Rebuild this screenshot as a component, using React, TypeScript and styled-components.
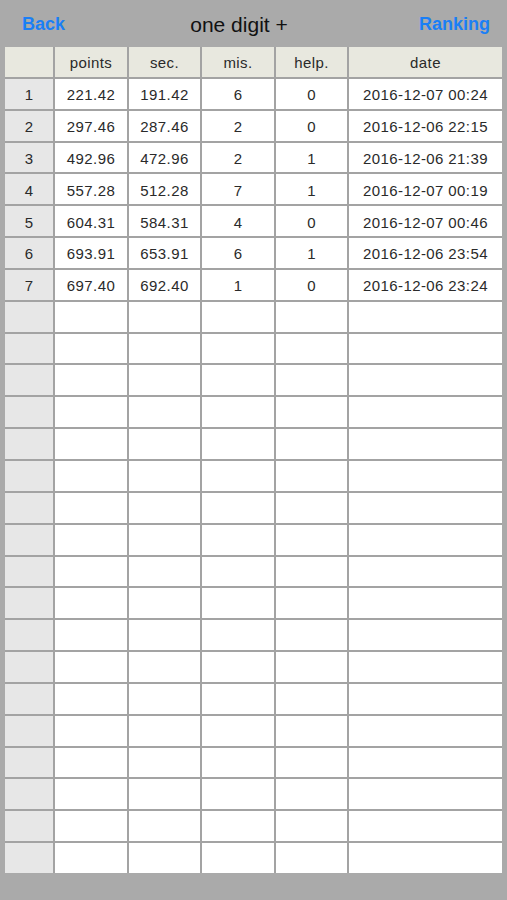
import React from 'react';
import styled, { createGlobalStyle } from 'styled-components';

type Kind = 'head' | 'index' | 'body';

const rows = [
  ['221.42', '191.42', '6', '0', '2016-12-07 00:24'],
  ['297.46', '287.46', '2', '0', '2016-12-06 22:15'],
  ['492.96', '472.96', '2', '1', '2016-12-06 21:39'],
  ['557.28', '512.28', '7', '1', '2016-12-07 00:19'],
  ['604.31', '584.31', '4', '0', '2016-12-07 00:46'],
  ['693.91', '653.91', '6', '1', '2016-12-06 23:54'],
  ['697.40', '692.40', '1', '0', '2016-12-06 23:24'],
];

const TOTAL_ROWS = 25;
const columns = ['points', 'sec.', 'mis.', 'help.', 'date'];

const Global = createGlobalStyle`
  body {
    margin: 0;
    background: #aaaaaa;
    font-family: "Liberation Sans", Arial, sans-serif;
  }
`;

const Screen = styled.div`
  width: 507px;
  height: 900px;
  background: #aaaaaa;
  overflow: hidden;
`;

const NavBar = styled.div`
  height: 47px;
  display: flex;
  align-items: center;
  justify-content: space-between;
  padding: 2px 17px 0 22px;
  box-sizing: border-box;
`;

const NavButton = styled.span`
  color: #1a7ff6;
  font-size: 18px;
  font-weight: bold;
`;

const Title = styled.span`
  color: #111;
  font-size: 21px;
  margin-right: 6px;
`;

const Grid = styled.div`
  margin: 0 5px;
  width: 497px;
  height: 826px;
  display: grid;
  grid-template-columns: 48px 72px 71px 72px 71px 153px;
  grid-template-rows: repeat(26, 1fr);
  gap: 2px;
  background: #a3a3a3;
`;

const Cell = styled.div<{ $kind: Kind }>`
  display: flex;
  align-items: center;
  justify-content: center;
  padding-top: 2px;
  font-size: 15px;
  letter-spacing: 0.4px;
  color: #2a2a2a;
  background: ${p =>
    p.$kind === 'head' ? '#e8e8df' : p.$kind === 'index' ? '#e7e7e7' : '#ffffff'};
`;

export default function App() {
  const body = Array.from({ length: TOTAL_ROWS }, (_, i) => rows[i]);
  return (
    <Screen>
      <Global />
      <NavBar>
        <NavButton>Back</NavButton>
        <Title>one digit +</Title>
        <NavButton>Ranking</NavButton>
      </NavBar>
      <Grid>
        <Cell $kind="head" />
        {columns.map(c => (
          <Cell key={c} $kind="head">{c}</Cell>
        ))}
        {body.map((r, i) => (
          <React.Fragment key={i}>
            <Cell $kind="index">{r ? i + 1 : ''}</Cell>
            {columns.map((c, j) => (
              <Cell key={c} $kind="body">{r ? r[j] : ''}</Cell>
            ))}
          </React.Fragment>
        ))}
      </Grid>
    </Screen>
  );
}
